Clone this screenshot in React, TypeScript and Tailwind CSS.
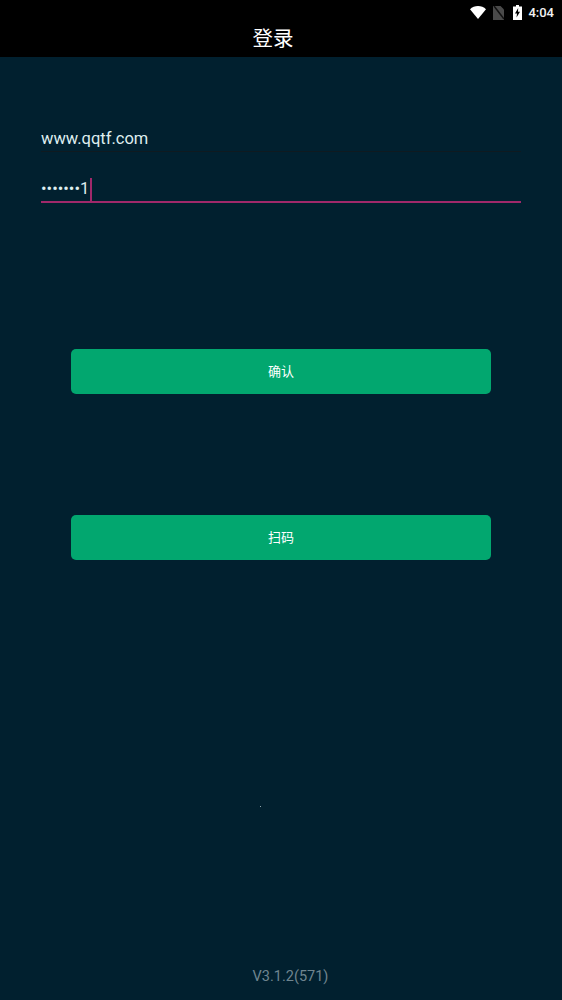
const WifiIcon = () => (
  <svg width="16" height="13" viewBox="0 0 16 13">
    <path d="M0 3.200C2.200 1.200 5 0 8 0s5.800 1.200 8 3.200L8 13z" fill="#fff" />
  </svg>
)

const NoSimIcon = () => (
  <svg width="11" height="14" viewBox="0 0 11 14">
    <path d="M0 0h7.500L11 3.500V14H0z" fill="#4a4a4a" />
    <path d="M1 0l10 13" stroke="#111" strokeWidth="1.500" />
  </svg>
)

const BatteryIcon = () => (
  <svg width="9" height="15" viewBox="0 0 9 15">
    <path d="M3 0h3v1.500h3V15H0V1.500h3z" fill="#fff" />
    <path d="M5.200 3L2 8.500h2L3.500 12.500 7 6.800H5z" fill="#000" />
  </svg>
)

const App = () => {
  return (
    <main className="relative h-[1000px] w-[562px] flex flex-col bg-[#01202f] font-['Roboto','Noto_Sans_CJK_SC',sans-serif] overflow-hidden">
      <header className="h-[57px] shrink-0 bg-black relative flex items-center justify-center">
        <h1 className="text-[20.500px] leading-none text-white pt-[18px] pr-[16px] font-['Noto_Sans_CJK_SC',sans-serif]">登录</h1>
        <div className="absolute top-[4px] right-[8px] flex items-center h-[17px]">
          <WifiIcon />
          <span className="ml-[7px]"><NoSimIcon /></span>
          <span className="ml-[9px]"><BatteryIcon /></span>
          <span className="ml-[6px] text-[13px] font-medium text-[#f2f2f2]">4:04</span>
        </div>
      </header>

      <div className="flex flex-col px-[41px] pt-[69px]">
        <div className="h-[26px] pt-[2px] flex items-center border-b border-[#0f1a20] text-[16.500px] text-[#dfeef0]">www.qqtf.com</div>
        <div className="mt-[25px] h-[26px] flex items-center border-b-2 border-[#a0286a] text-[16.500px] text-[#dfeef0]">
          <span>•••••••1</span>
          <span className="w-[2px] h-[23px] bg-[#a0286a] ml-[1px]" />
        </div>
      </div>

      <div className="flex flex-col px-[71px] pt-[146px] gap-[121px]">
        <button className="h-[45px] pb-[2px] rounded-[5px] bg-[#02a76f] text-[13px] text-white font-['Noto_Sans_CJK_SC',sans-serif]">确认</button>
        <button className="h-[45px] pb-[2px] rounded-[5px] bg-[#02a76f] text-[13px] text-white font-['Noto_Sans_CJK_SC',sans-serif]">扫码</button>
      </div>

      <span className="absolute left-[260px] top-[806px] w-[1px] h-[1px] bg-[#8fa5ad]" />

      <div className="flex-1 flex flex-col items-center justify-end pb-[12px] pl-[19px]">
        <span className="text-[14.500px] text-[#6f858f]">V3.1.2(571)</span>
      </div>
    </main>
  )
}

export default App
